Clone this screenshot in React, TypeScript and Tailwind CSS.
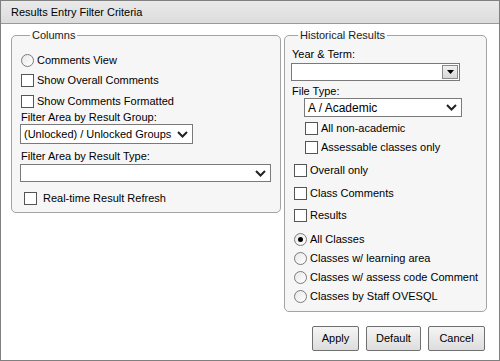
import React from 'react';

const Check = ({ label, className = '' }: { label: string; className?: string }) => (
  <label className={`flex items-center h-[18px] ${className}`}>
    <span className="w-[13px] h-[13px] border border-[#555] bg-white shrink-0" />
    <span className="ml-[3px] leading-[14px]">{label}</span>
  </label>
);

const Radio = ({ label, checked = false, className = '' }: { label: string; checked?: boolean; className?: string }) => (
  <label className={`flex items-center h-[18px] ${className}`}>
    <span className="w-[13px] h-[13px] rounded-full border border-[#7a7a7a] bg-gradient-to-br from-[#e8e8e8] to-white shrink-0 flex items-center justify-center">
      {checked && <span className="w-[5px] h-[5px] rounded-full bg-black" />}
    </span>
    <span className="ml-[3px] leading-[14px]">{label}</span>
  </label>
);

const Chevron = () => (
  <svg width="11" height="7" viewBox="0 0 11 7" className="shrink-0">
    <polyline points="1,1 5.5,5.5 10,1" fill="none" stroke="#222" strokeWidth="2" />
  </svg>
);

const Select = ({ value = '', className = '' }: { value?: string; className?: string }) => (
  <div className={`flex items-center justify-between border border-[#7a7a7a] bg-white pl-[3px] pr-[4px] ${className}`}>
    <span className="leading-[14px] whitespace-nowrap">{value}</span>
    <Chevron />
  </div>
);

export default function App() {
  return (
    <div className="w-[500px] h-[361px] border border-[#808080] bg-white text-[11px] text-black font-['Liberation_Sans',Arial,sans-serif]">
      <div className="h-[23px] border-b border-[#9a9a9a] bg-gradient-to-b from-[#eaeaea] to-[#dcdcdc] pl-[10px] flex items-center">
        Results Entry Filter Criteria
      </div>

      <div className="flex items-start pl-[10px] pt-[4px] gap-[3px]">
        {/* Columns */}
        <fieldset className="w-[269px] border border-[#a3a3a3] rounded-[5px] bg-[#f6f6f6] pl-[9px] pr-[9px] pb-[5px]">
          <legend className="ml-[9px] px-[2px] leading-[14px] text-[#222]">Columns</legend>
          <Radio label="Comments View" className="mt-[9px]" />
          <Check label="Show Overall Comments" className="mt-[2px]" />
          <Check label="Show Comments Formatted" className="mt-[3px]" />
          <div className="leading-[14px] h-[14px]">Filter Area by Result Group:</div>
          <Select value="(Unlocked) / Unlocked Groups" className="w-[173px] h-[20px] -ml-[1px]" />
          <div className="leading-[14px] h-[14px] mt-[5px]">Filter Area by Result Type:</div>
          <Select className="w-[251px] h-[18px] mt-[1px] -ml-[1px]" />
          <label className="flex items-center h-[18px] mt-[7px] pl-[3px]">
            <span className="w-[13px] h-[13px] border border-[#555] bg-white shrink-0" />
            <span className="ml-[6px] leading-[14px]">Real-time Result Refresh</span>
          </label>
        </fieldset>

        {/* Historical */}
        <div className="flex flex-col">
          <fieldset className="w-[203px] border border-[#a3a3a3] rounded-[5px] bg-[#f6f6f6] pl-[6px] pb-[6px]">
            <legend className="ml-[7px] px-[2px] leading-[14px] text-[#222]">Historical Results</legend>
            <div className="leading-[14px] h-[14px] mt-[5px] pl-[1px]">Year &amp; Term:</div>
            <div className="w-[169px] h-[18px] mt-[2px] border border-[#7a7a7a] bg-white flex items-center justify-end pr-[1px]">
              <div className="w-[16px] h-[14px] border border-[#8a8a8a] bg-gradient-to-b from-[#f0f0f0] to-[#d8d8d8] flex items-center justify-center">
                <svg width="7" height="4" viewBox="0 0 7 4">
                  <polygon points="0,0 7,0 3.5,4" fill="#000" />
                </svg>
              </div>
            </div>
            <div className="leading-[14px] h-[14px] mt-[3px] pl-[1px]">File Type:</div>
            <Select value="A / Academic" className="w-[158px] h-[19px] ml-[13px] text-[12px]" />
            <div className="pl-[14px]">
              <Check label="All non-academic" className="mt-[2px]" />
              <Check label="Assessable classes only" className="mt-[1px]" />
            </div>
            <div className="pl-[3px]">
              <Check label="Overall only" className="mt-[5px]" />
              <Check label="Class Comments" className="mt-[5px]" />
              <Check label="Results" className="mt-[4px]" />
              <Radio label="All Classes" checked className="mt-[6px]" />
              <Radio label="Classes w/ learning area" className="mt-[1px]" />
              <Radio label="Classes w/ assess code Comment" className="mt-[1px]" />
              <Radio label="Classes by Staff OVESQL" className="mt-[1px]" />
            </div>
          </fieldset>

          <div className="flex justify-end gap-[7px] mt-[14px] mr-[2px]">
            {[
              ['Apply', 'w-[47px]'],
              ['Default', 'w-[55px]'],
              ['Cancel', 'w-[57px]'],
            ].map(([t, w]) => (
              <button
                key={t}
                className={`${w} h-[25px] border border-[#707070] rounded-[2px] bg-gradient-to-b from-[#f5f5f5] to-[#dddddd] text-[11px] leading-none`}
              >
                {t}
              </button>
            ))}
          </div>
        </div>
      </div>
    </div>
  );
}
